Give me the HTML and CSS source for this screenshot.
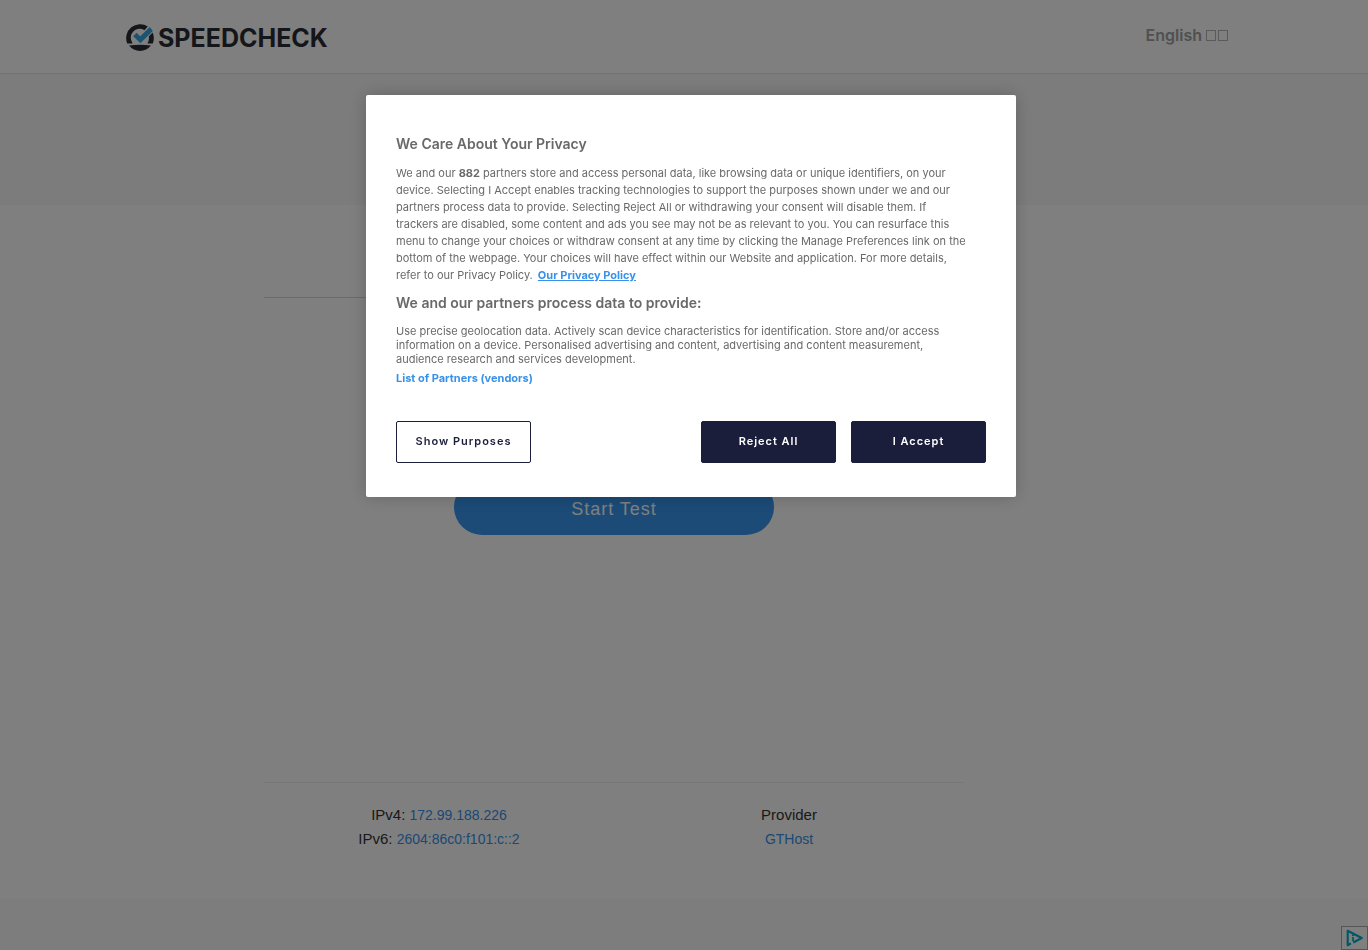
FILE: index.html
```
<!DOCTYPE html>
<html lang="en">
<head>
    <meta charset="UTF-8">
    <meta name="viewport" content="width=device-width, initial-scale=1.0">
    <title>Speedcheck</title>
    <link rel="stylesheet" href="styles.css">
</head>
<body>
    <header class="header">
        <div class="header-inner">
            <a class="logo" href="#">
                <svg class="logo-icon" viewBox="0 0 28 28" aria-hidden="true">
                    <path d="M1.2 19.4A14 14 0 0 1 21.8 2.4L18.4 6.2A8.8 8.8 0 0 0 6 18Q6.2 18.8 6.6 19.4Z" fill="#2a2d34"/>
                    <path d="M26.6 8.4A14 14 0 0 1 26.8 19.4H21.4A8.8 8.8 0 0 0 22.8 12.6Z" fill="#2a2d34"/>
                    <path d="M3 21.6C10 20.6 18 20.6 25 21.6A14 14 0 0 1 3 21.6Z" fill="#2a2d34"/>
                    <path d="M7.2 12.2L10.6 8.8L14.2 12.2L23.8 3L26.8 7L14.4 19.2Z" fill="#3aa6dc"/>
                </svg>
                <span>SPEEDCHECK</span>
            </a>
            <a class="language" href="#">English <span class="glyph-box"></span><span class="glyph-box"></span></a>
        </div>
    </header>

    <div class="banner"></div>

    <div class="page">
        <main class="content">
            <section class="test">
                <button class="start" type="button">Start Test</button>
            </section>
            <section class="connection">
                <div>
                    <p>IPv4: <a href="#">172.99.188.226</a></p>
                    <p>IPv6: <a href="#">2604:86c0:f101:c::2</a></p>
                </div>
                <div>
                    <p>Provider</p>
                    <p><a href="#">GTHost</a></p>
                </div>
            </section>
        </main>
    </div>

    <footer class="footer">
        <a class="adchoices" href="#" aria-label="AdChoices">
            <svg viewBox="0 0 16 16" aria-hidden="true">
                <path d="M4.6 13L1.6 14.8V1.2L14.8 8L6.8 12.2" fill="none" stroke="#00aecd" stroke-width="2" stroke-linejoin="round"/>
                <path d="M6.6 7V11" stroke="#00aecd" stroke-width="1.6"/>
                <circle cx="6.6" cy="5.4" r="1" fill="#00aecd"/>
            </svg>
        </a>
    </footer>

    <div class="overlay">
        <div class="dialog" role="dialog" aria-modal="true" aria-labelledby="dialogTitle">
            <h2 id="dialogTitle">We Care About Your Privacy</h2>
            <p class="policy">We and our <b>882</b> partners store and access personal data, like browsing data or unique identifiers, on your device. Selecting I Accept enables tracking technologies to support the purposes shown under we and our partners process data to provide. Selecting Reject All or withdrawing your consent will disable them. If trackers are disabled, some content and ads you see may not be as relevant to you. You can resurface this menu to change your choices or withdraw consent at any time by clicking the Manage Preferences link on the bottom of the webpage. Your choices will have effect within our Website and application. For more details, refer to our Privacy Policy. <a href="#">Our Privacy Policy</a></p>
            <h3>We and our partners process data to provide:</h3>
            <p class="purposes">Use precise geolocation data. Actively scan device characteristics for identification. Store and/or access information on a device. Personalised advertising and content, advertising and content measurement, audience research and services development.</p>
            <a class="vendors" href="#">List of Partners (vendors)</a>
            <div class="actions">
                <button class="btn outline" type="button">Show Purposes</button>
                <button class="btn" type="button">Reject All</button>
                <button class="btn" type="button">I Accept</button>
            </div>
        </div>
    </div>
</body>
</html>
```
FILE: styles.css
```
* {
    box-sizing: border-box;
}

body {
    margin: 0;
    min-height: 100vh;
    display: flex;
    flex-direction: column;
    background: #fff;
    color: #333;
    font-family: "Liberation Sans", Arial, sans-serif;
    font-size: 15px;
    line-height: 24px;
}

p, h2, h3 {
    margin: 0;
}

a {
    color: #3891e8;
    text-decoration: none;
}

button {
    font-family: inherit;
    cursor: pointer;
}

.header {
    border-bottom: 1px solid #e4e4e4;
}

.header-inner {
    display: flex;
    justify-content: space-between;
    align-items: center;
    height: 73px;
    max-width: 1140px;
    margin: 0 auto;
    padding: 0 24px 0 12px;
}

.logo {
    display: flex;
    align-items: center;
    gap: 4px;
    padding-top: 2px;
    color: #2a2d34;
    font-family: Inter, sans-serif;
    font-size: 25px;
    font-weight: 700;
}

.logo-icon {
    width: 28px;
    height: 28px;
}

.language {
    padding-bottom: 4px;
    color: #a0a0a0;
    font-family: Inter, sans-serif;
    font-size: 16px;
    font-weight: 600;
}

.glyph-box {
    display: inline-block;
    width: 10px;
    height: 11px;
    margin-right: 2px;
    border: 1px solid #b4b4b4;
}

.banner {
    height: 131px;
    background: #f8f8f8;
}

.page {
    width: 100%;
    max-width: 840px;
    margin: 0 auto;
    padding-top: 92px;
    flex: 1;
}

.content {
    max-width: 700px;
}

.test {
    display: flex;
    justify-content: center;
    padding: 181px 0 247px;
    border-top: 1px solid #d8d8d8;
}

.start {
    width: 320px;
    height: 56px;
    padding-top: 6px;
    border: 0;
    border-radius: 28px;
    background: #3897f0;
    color: #fff;
    font-size: 18px;
    letter-spacing: 1px;
}

.connection {
    display: grid;
    grid-template-columns: 1fr 1fr;
    padding-top: 20px;
    border-top: 1px solid #eee;
    text-align: center;
}

.connection a {
    font-size: 14px;
}

.footer {
    display: flex;
    justify-content: flex-end;
    align-items: flex-end;
    height: 51px;
    background: #fafafa;
}

.adchoices {
    display: flex;
    width: 27px;
    height: 24px;
    padding: 2px 4px;
    border: 1px solid #aaa;
    background: #fff;
}

/* consent dialog */
.overlay {
    position: fixed;
    inset: 0;
    padding: 95px 0 0 14px;
    background: rgba(0, 0, 0, 0.5);
}

.dialog {
    width: 650px;
    max-width: 100%;
    margin: 0 auto;
    padding: 40px 30px 34px;
    border-radius: 2px;
    background: #fff;
    box-shadow: 0 0 18px rgba(0, 0, 0, 0.2);
    color: #696969;
    font-family: Inter, sans-serif;
    font-size: 11px;
    line-height: 17px;
}

.dialog h2,
.dialog h3 {
    font-size: 14px;
    font-weight: 600;
    line-height: 18px;
}

.dialog p {
    max-width: 573px;
}

.policy {
    margin: 12px 0 10px;
}

.policy a {
    margin-left: 2px;
    font-weight: 700;
    text-decoration: underline;
}

.purposes {
    margin-top: 12px;
    line-height: 14px;
}

.vendors {
    display: block;
    margin-top: 4px;
    font-weight: 700;
}

.actions {
    display: flex;
    gap: 15px;
    margin-top: 34px;
}

.btn {
    width: 135px;
    height: 42px;
    padding-bottom: 3px;
    border: 1px solid #1b1e3b;
    border-radius: 2px;
    background: #1b1e3b;
    color: #fff;
    font-size: 11px;
    font-weight: 600;
    letter-spacing: 1px;
}

.btn.outline {
    margin-right: auto;
    background: #fff;
    color: #1b1e3b;
}
```
